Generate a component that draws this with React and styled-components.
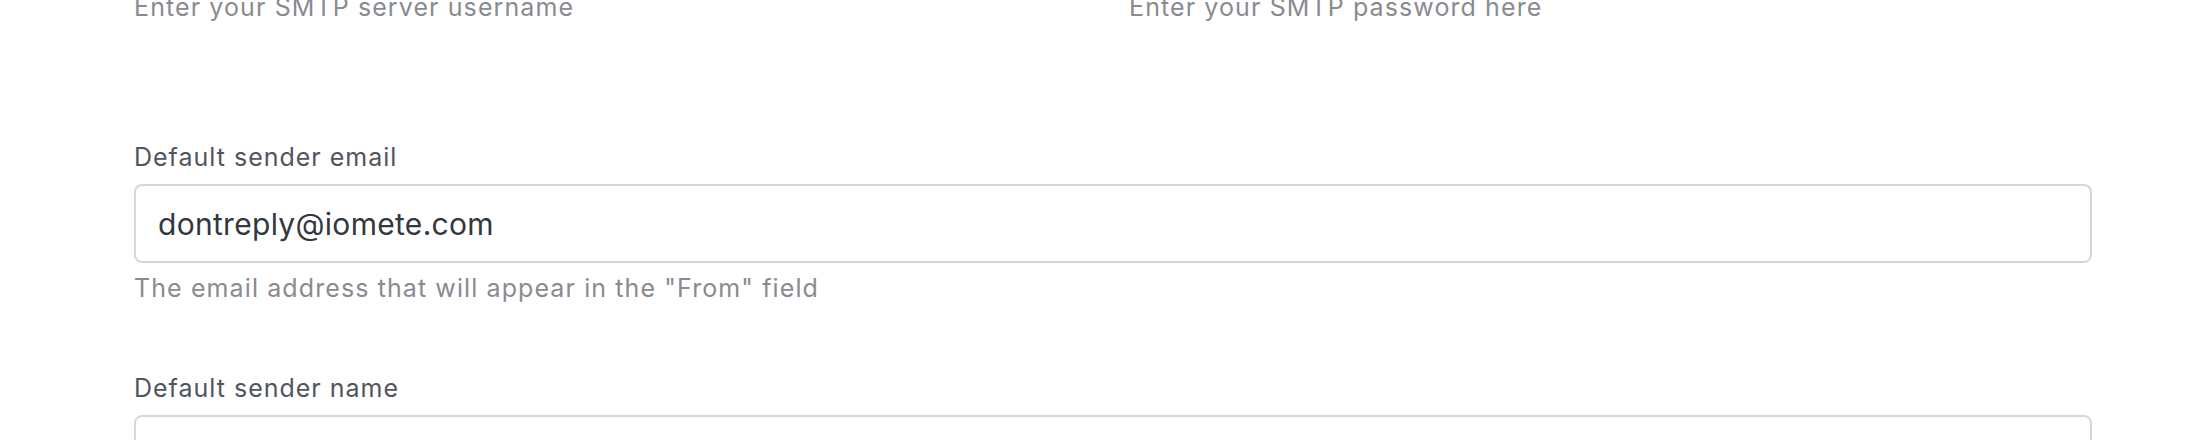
import React from "react";
import styled, { createGlobalStyle } from "styled-components";

const Global = createGlobalStyle`
  html, body { margin: 0; padding: 0; background: #ffffff; }
  body { font-family: Inter, "Noto Sans", "Liberation Sans", sans-serif; overflow: hidden; }
  * { box-sizing: border-box; }
`;

const Page = styled.div`
  width: 2206px;
  height: 440px;
  overflow: hidden;
`;

const Form = styled.form`
  display: flex;
  flex-direction: column;
  width: 1958px;
  margin-left: 134px;
  margin-top: -141px;
`;

const Row = styled.div`
  display: grid;
  grid-template-columns: 1fr 1fr;
  column-gap: 32px;
  margin-bottom: ${(p) => p.$after || 0}px;
`;

const Field = styled.div`
  display: flex;
  flex-direction: column;
  margin-bottom: ${(p) => p.$after || 0}px;
`;

const Label = styled.label`
  font-size: 25px;
  line-height: 35px;
  letter-spacing: 1px;
  color: #50555e;
  margin-bottom: 9px;
`;

const Input = styled.input`
  height: 79px;
  width: 100%;
  border: 2px solid #d3d7de;
  border-radius: 8px;
  padding: 0 22px;
  font-family: inherit;
  font-size: 30px;
  letter-spacing: 0.3px;
  color: #33373f;
  background: #ffffff;
  outline: none;
`;

const Help = styled.div`
  font-size: 25px;
  line-height: 35px;
  letter-spacing: 1.1px;
  color: #898b90;
  margin-top: 8px;
`;

export default function App() {
  return (
    <Page>
      <Global />
      <Form onSubmit={(e) => e.preventDefault()}>
        <Row $after={115}>
          <Field>
            <Label>Username</Label>
            <Input defaultValue="" />
            <Help>Enter your SMTP server username</Help>
          </Field>
          <Field>
            <Label>Password</Label>
            <Input type="password" defaultValue="" />
            <Help>Enter your SMTP password here</Help>
          </Field>
        </Row>
        <Field $after={65}>
          <Label>Default sender email</Label>
          <Input defaultValue="dontreply@iomete.com" />
          <Help>The email address that will appear in the "From" field</Help>
        </Field>
        <Field>
          <Label>Default sender name</Label>
          <Input defaultValue="" />
          <Help>The name that will appear in the "From" field</Help>
        </Field>
      </Form>
    </Page>
  );
}
